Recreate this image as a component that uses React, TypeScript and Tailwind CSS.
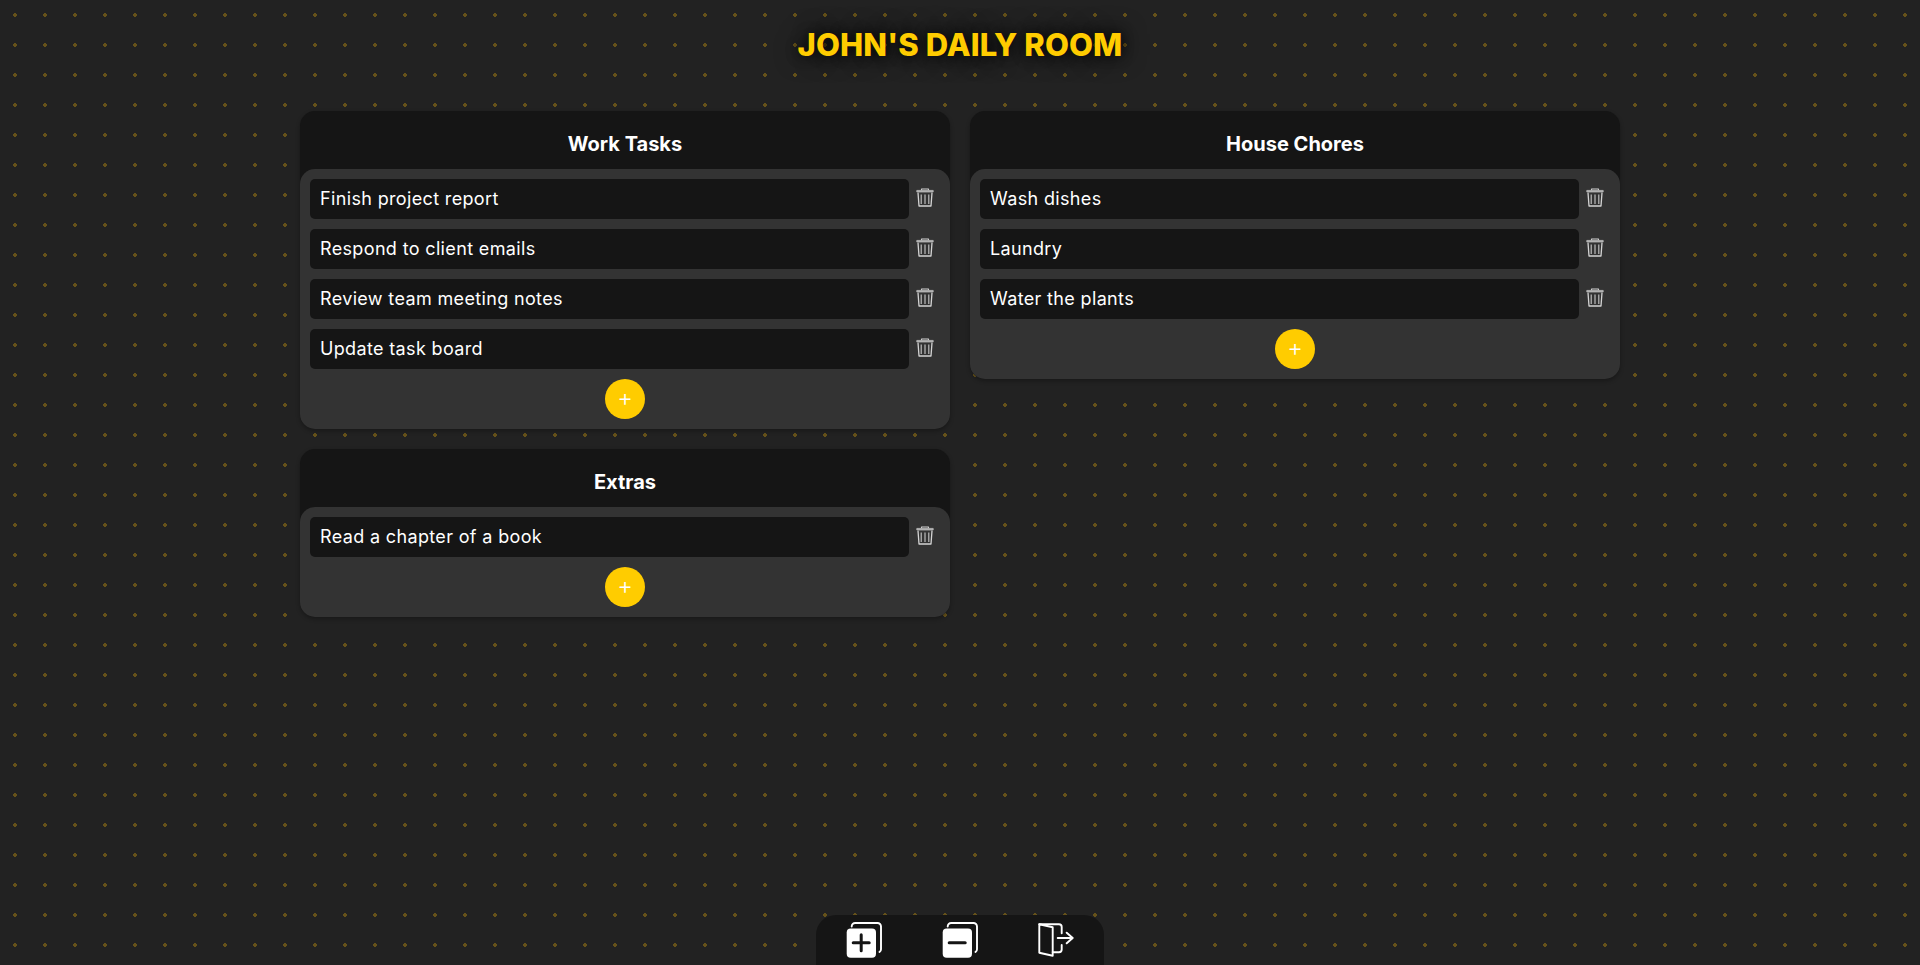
import { Fragment } from 'react';

interface Board {
  title: string;
  tasks: string[];
}

const LEFT: Board[] = [
  { title: 'Work Tasks', tasks: ['Finish project report', 'Respond to client emails', 'Review team meeting notes', 'Update task board'] },
  { title: 'Extras', tasks: ['Read a chapter of a book'] },
];

const RIGHT: Board[] = [
  { title: 'House Chores', tasks: ['Wash dishes', 'Laundry', 'Water the plants'] },
];

function TrashIcon() {
  return (
    <svg width="18" height="19" viewBox="0 0 18 19" fill="none" stroke="#d4d4d4" strokeWidth="1.3" strokeLinejoin="round">
      <path d="M5.5 2.2V1h7v1.2" strokeWidth="1.1" />
      <path d="M0.8 2.4h16.4v1.6H0.8z" fill="#b0b0b0" stroke="#b8b8b8" strokeWidth="0.8" />
      <path d="M2 4.6 3 18h12l1-13.4" />
      <path d="M5.2 6.5v9.5M9 6.5v9.5M12.8 6.5v9.5" strokeWidth="1.1" stroke="#c8c8c8" />
    </svg>
  );
}

function BoardCard({ board }: { board: Board }) {
  return (
    <div className="bg-[#151515] rounded-[15px] shadow-[0_2px_4px_rgba(0,0,0,0.3)]">
      <h2 className="h-[58px] pt-[7px] flex items-center justify-center text-[20px] font-bold text-white">{board.title}</h2>
      <div className="bg-[#333333] rounded-[15px] p-[10px] flex flex-col gap-[10px]">
        {board.tasks.map(t => (
          <div key={t} className="flex items-center">
            <div className="w-[599px] h-10 bg-[#151515] rounded-[5px] px-[10px] pb-[2px] flex items-center text-[18px] tracking-[0.35px] text-white">{t}</div>
            <div className="flex-1 flex justify-center pb-[3px]">
              <TrashIcon />
            </div>
          </div>
        ))}
        <div className="w-10 h-10 rounded-full bg-[#ffcc00] self-center flex items-center justify-center pb-[2px] text-white text-[24px] font-light">+</div>
      </div>
    </div>
  );
}

function BackSheet() {
  return <path d="M5.7 4.5a3.5 3.5 0 0 1 3.5-3.5H31.5a3.5 3.5 0 0 1 3.5 3.5V27a3.5 3.5 0 0 1-1.5 3" stroke="white" strokeWidth="1.9" strokeLinecap="round" />;
}

function AddIcon() {
  return (
    <svg width="36" height="36" viewBox="0 0 36 36" fill="none">
      <BackSheet />
      <rect x="0.7" y="6.5" width="29.3" height="29.2" rx="4" fill="white" />
      <path d="M15.2 12.7v16M7.2 20.7h16" stroke="#151515" strokeWidth="3" strokeLinecap="round" />
    </svg>
  );
}

function RemoveIcon() {
  return (
    <svg width="36" height="36" viewBox="0 0 36 36" fill="none">
      <BackSheet />
      <rect x="0.7" y="6.5" width="29.3" height="29.2" rx="4" fill="white" />
      <path d="M7.2 20.7h16" stroke="#151515" strokeWidth="3" strokeLinecap="round" />
    </svg>
  );
}

function ExitIcon() {
  return (
    <svg width="36" height="36" viewBox="0 0 36 36" fill="none" stroke="white" strokeWidth="1.9" strokeLinecap="round" strokeLinejoin="round">
      <path d="M1.3 2.3 14.7 5.3V33.7L1.3 30.7Z" />
      <path d="M1.3 2.3H21a2.7 2.7 0 0 1 2.7 2.7V11.3" />
      <path d="M23.7 23V27.6a2.7 2.7 0 0 1-2.7 2.7H14.7" />
      <path d="M19.7 16H34.7M28.7 10.7 34.7 16 28.7 21.3" />
    </svg>
  );
}

function Column({ boards }: { boards: Board[] }) {
  return (
    <div className="flex flex-col gap-5">
      {boards.map(b => (
        <Fragment key={b.title}>
          <BoardCard board={b} />
        </Fragment>
      ))}
    </div>
  );
}

export default function App() {
  return (
    <div className="h-[965px] overflow-hidden bg-[#222222] bg-[radial-gradient(circle,#66521a_2px,transparent_2px)] bg-[size:30px_30px] font-['Inter',sans-serif] flex flex-col items-center">
      <h1 className="mt-[23px] h-[44px] flex items-center text-[31px] font-extrabold tracking-[0.1px] text-[#ffcc00] [text-shadow:0_0_24px_#000,0_0_12px_rgba(0,0,0,0.6)]">JOHN'S DAILY ROOM</h1>
      <div className="mt-[44px] w-[1320px] grid grid-cols-2 gap-5 items-start">
        <Column boards={LEFT} />
        <Column boards={RIGHT} />
      </div>
      <div className="mt-auto w-[288px] h-[50px] bg-[#151515] rounded-t-[20px] flex items-start justify-center gap-[60px] pt-[7px]">
        <AddIcon />
        <RemoveIcon />
        <ExitIcon />
      </div>
    </div>
  );
}
